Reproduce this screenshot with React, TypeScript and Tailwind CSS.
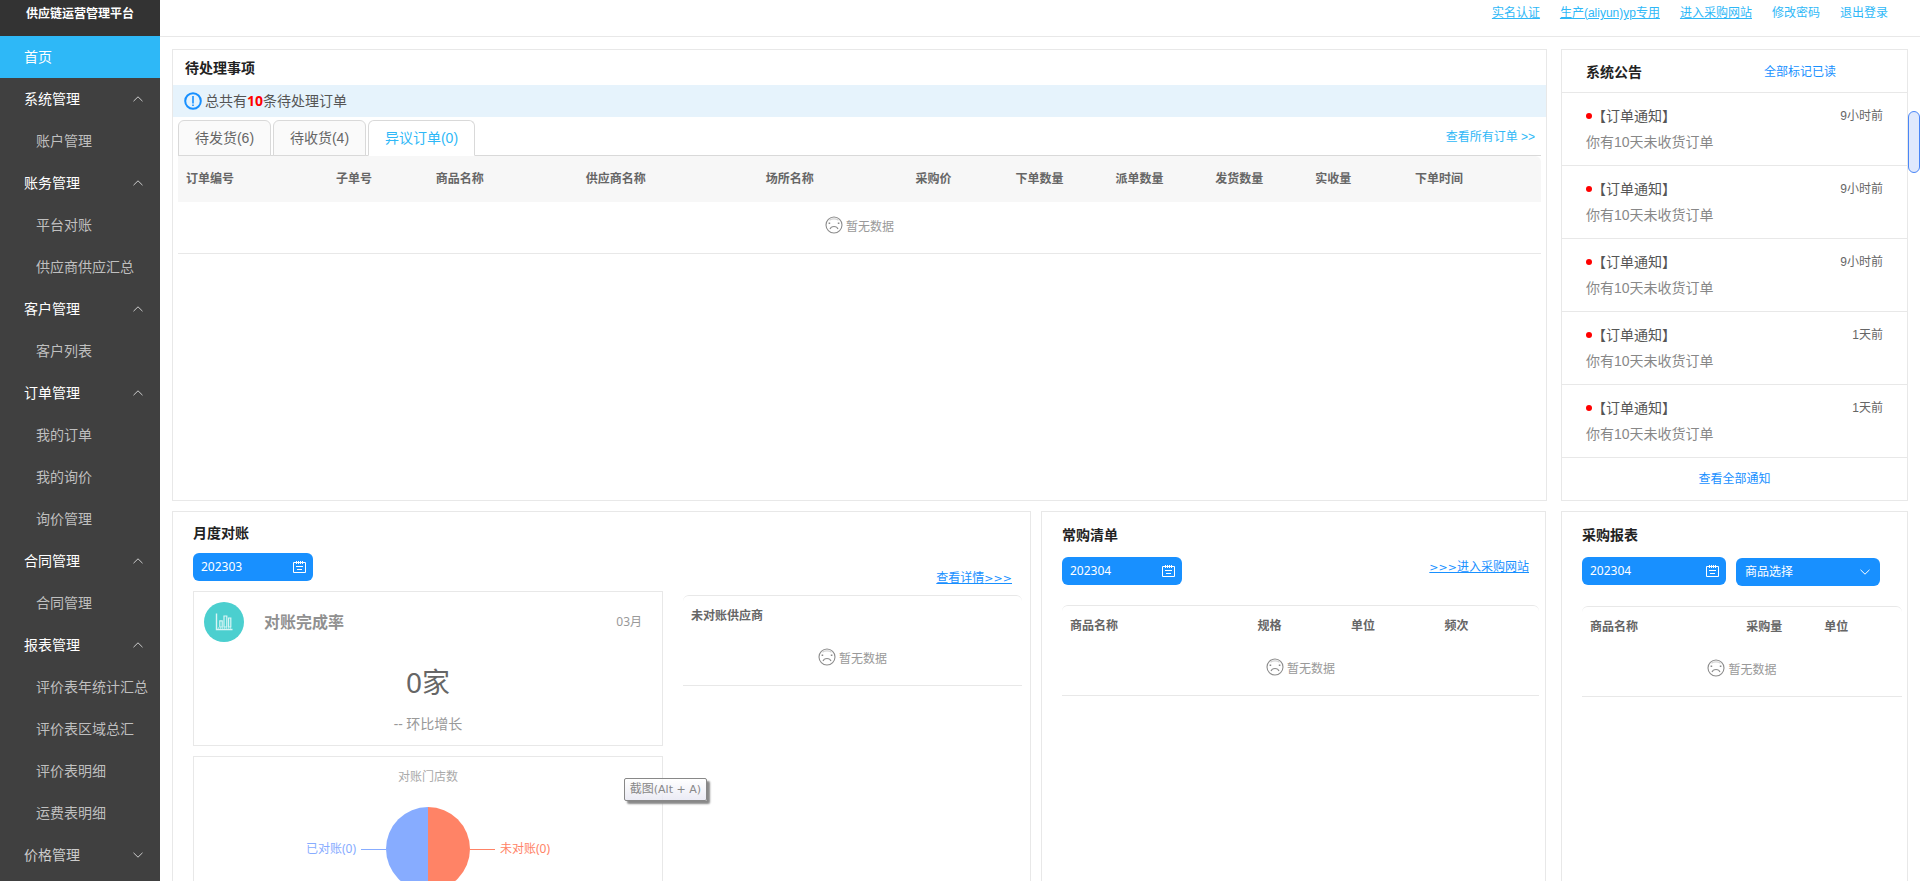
import React from "react";

type MenuItem = { label: string; kind: "home" | "group" | "item"; open?: boolean };

const menu: MenuItem[] = [
  { label: "首页", kind: "home" },
  { label: "系统管理", kind: "group", open: true },
  { label: "账户管理", kind: "item" },
  { label: "账务管理", kind: "group", open: true },
  { label: "平台对账", kind: "item" },
  { label: "供应商供应汇总", kind: "item" },
  { label: "客户管理", kind: "group", open: true },
  { label: "客户列表", kind: "item" },
  { label: "订单管理", kind: "group", open: true },
  { label: "我的订单", kind: "item" },
  { label: "我的询价", kind: "item" },
  { label: "询价管理", kind: "item" },
  { label: "合同管理", kind: "group", open: true },
  { label: "合同管理", kind: "item" },
  { label: "报表管理", kind: "group", open: true },
  { label: "评价表年统计汇总", kind: "item" },
  { label: "评价表区域总汇", kind: "item" },
  { label: "评价表明细", kind: "item" },
  { label: "运费表明细", kind: "item" },
  { label: "价格管理", kind: "group", open: false },
];

const notices = ["9小时前", "9小时前", "9小时前", "1天前", "1天前"];

type Column = { title: string; width: string };

const orderColumns: Column[] = [
  { title: "订单编号", width: "w-[11%]" },
  { title: "子单号", width: "w-[7.33%]" },
  { title: "商品名称", width: "w-[11%]" },
  { title: "供应商名称", width: "w-[13.2%]" },
  { title: "场所名称", width: "w-[11%]" },
  { title: "采购价", width: "w-[7.33%]" },
  { title: "下单数量", width: "w-[7.33%]" },
  { title: "派单数量", width: "w-[7.33%]" },
  { title: "发货数量", width: "w-[7.33%]" },
  { title: "实收量", width: "w-[7.33%]" },
  { title: "下单时间", width: "" },
];

const frequentColumns: Column[] = [
  { title: "商品名称", width: "w-[39.3%]" },
  { title: "规格", width: "w-[19.6%]" },
  { title: "单位", width: "w-[19.6%]" },
  { title: "频次", width: "" },
];

const reportColumns: Column[] = [
  { title: "商品名称", width: "w-[48.8%]" },
  { title: "采购量", width: "w-[24.4%]" },
  { title: "单位", width: "" },
];

function Chevron({ up }: { up?: boolean }) {
  return (
    <svg width="10" height="6" viewBox="0 0 10 6" fill="none" stroke="currentColor" strokeWidth="1" aria-hidden="true">
      <path d={up ? "M0.5 5.2 5 0.8 9.5 5.2" : "M0.5 0.8 5 5.2 9.5 0.8"} />
    </svg>
  );
}

function CalendarIcon() {
  return (
    <svg width="14" height="14" viewBox="0 0 14 14" fill="none" stroke="currentColor" strokeWidth="1" aria-hidden="true">
      <path d="M3 2.5H0.5V12.5H12.5V2.5H10M3 2.5H10" />
      <path d="M3.5 1V4M5.5 1V4M7.5 1V4M9.5 1V4" />
      <path d="M3 6.5H10M4 9.5H9" />
    </svg>
  );
}

function FrownIcon() {
  return (
    <svg width="18" height="18" viewBox="0 0 18 18" fill="none" stroke="#8c8c8c" strokeWidth="1.1" aria-hidden="true">
      <circle cx="9" cy="9" r="8" />
      <path d="M4.5 4.2C7 2.4 11 2.4 13.5 4.2" stroke="#d4d4d4" />
      <path d="M5 13C6.2 9.6 11.8 9.6 13 13" />
      <path d="M3.6 7.3H5.2M12.8 7.3H14.4" strokeWidth="1.6" />
    </svg>
  );
}

function ChartIcon() {
  return (
    <svg width="18" height="18" viewBox="0 0 18 18" fill="none" stroke="#d9f5f5" strokeWidth="1.2" aria-hidden="true">
      <path d="M1.5 0.5V16.5H17.5" strokeWidth="1.4" />
      <path d="M4.8 14V7.8H7.2V14ZM9 14V3H11.8V14ZM13.6 14V5H15.8V14Z" />
      <path d="M3 15H17" strokeDasharray="1 1" />
    </svg>
  );
}

function Empty() {
  return (
    <div className="flex items-start justify-center gap-[3px] text-xs text-[#999]">
      <FrownIcon />
      <span className="pt-[3px] leading-4">暂无数据</span>
    </div>
  );
}

function DataTable({ columns, shaded }: { columns: Column[]; shaded?: boolean }) {
  return (
    <table className="w-full table-fixed border-separate border-spacing-0 text-xs">
      <thead>
        <tr>
          {columns.map((c, i) => (
            <th
              key={c.title}
              className={`px-2 text-left font-bold text-[#666] ${c.width} ${shaded ? "h-[46px] bg-[#f7f7f7]" : "h-[41px] border-t border-[#e8e8e8]"} ${
                i === 0 && !shaded ? "rounded-tl-md" : ""
              } ${i === columns.length - 1 ? "rounded-tr-md" : ""}`}
            >
              {c.title}
            </th>
          ))}
        </tr>
      </thead>
      <tbody>
        <tr>
          <td colSpan={columns.length} className={`border-b border-[#e8e8e8] align-top ${shaded ? "h-[52px] pt-3.5" : "h-[50px] pt-3"}`}>
            <Empty />
          </td>
        </tr>
      </tbody>
    </table>
  );
}

function Arrows() {
  return <span className="font-['DejaVu_Sans',sans-serif] text-[11px]">&gt;&gt;&gt;</span>;
}

function MonthPicker({ value, label, width }: { value: string; label: string; width: string }) {
  return (
    <label className={`flex h-7 items-center rounded-md bg-[#1890ff] pr-1.5 pl-2 text-white ${width}`}>
      <input aria-label={label} defaultValue={value} className="w-0 min-w-0 flex-1 bg-transparent text-xs outline-none" />
      <CalendarIcon />
    </label>
  );
}

function Tab({ children, active, width }: { children: React.ReactNode; active?: boolean; width: string }) {
  return (
    <button
      role="tab"
      aria-selected={!!active}
      className={`h-9 shrink-0 rounded-t-md border font-['Liberation_Sans','Noto_Sans_CJK_SC',sans-serif] text-sm ${width} ${
        active ? "border-[#d9d9d9] border-b-white bg-white text-[#2eb8f7]" : "border-[#d9d9d9] bg-[#fafafa] text-[#666]"
      }`}
    >
      {children}
    </button>
  );
}

function Sidebar() {
  return (
    <aside className="flex w-40 shrink-0 flex-col bg-[#404040]">
      <h1 className="flex h-9 shrink-0 items-start justify-center bg-[#333] pt-[5px] text-xs leading-[18px] font-bold text-white">供应链运营管理平台</h1>
      <nav className="flex-1 overflow-y-auto text-sm [scrollbar-width:none]">
        {menu.map((m, i) => {
          if (m.kind === "home")
            return (
              <a key={i} href="#" className="flex h-[42px] items-center bg-[#2eb8f7] px-6 text-white">
                {m.label}
              </a>
            );
          if (m.kind === "group")
            return (
              <button key={i} aria-expanded={m.open} className={`flex h-[42px] w-full items-center justify-between pr-[17px] pl-6 ${m.open ? "text-white" : "text-[#ccc]"}`}>
                {m.label}
                <span className="text-[#ccc]">
                  <Chevron up={m.open} />
                </span>
              </button>
            );
          return (
            <a key={i} href="#" className="flex h-[42px] items-center pl-9 whitespace-nowrap text-[#bfbfbf]">
              {m.label}
            </a>
          );
        })}
      </nav>
    </aside>
  );
}

function PendingPanel() {
  return (
    <section className="border border-[#e8e8e8]">
      <h2 className="flex h-[35px] items-center px-3 text-sm font-bold text-[#222]">待处理事项</h2>
      <p className="flex h-8 items-center gap-[3px] bg-[#e6f3fc] px-[11px] text-sm text-[#555]">
        <svg width="18" height="18" viewBox="0 0 18 18" fill="none" stroke="#1890ff" aria-hidden="true">
          <circle cx="9" cy="9" r="7.8" strokeWidth="2" />
          <path d="M9 4V11.6M9 12.4V14" strokeWidth="1.6" />
        </svg>
        <span>
          总共有<b className="text-[#f00]">10</b>条待处理订单
        </span>
      </p>
      <div className="px-[5px] pt-[3px]">
        <div className="flex items-center justify-between border-b border-[#d9d9d9]">
          <div role="tablist" className="-mb-px flex gap-0.5">
            <Tab width="w-[93px]">待发货(6)</Tab>
            <Tab width="w-[93px]">待收货(4)</Tab>
            <Tab width="w-[107px]" active>
              异议订单(0)
            </Tab>
          </div>
          <a href="#" className="mr-1.5 pb-0.5 font-['Liberation_Sans','Noto_Sans_CJK_SC',sans-serif] text-xs text-[#2eb8f7]">
            查看所有订单 &gt;&gt;
          </a>
        </div>
        <DataTable columns={orderColumns} shaded />
      </div>
    </section>
  );
}

function NoticePanel() {
  return (
    <section className="border border-[#e8e8e8] font-['Liberation_Sans','Noto_Sans_CJK_SC',sans-serif]">
      <div className="flex h-[43px] items-center border-b border-[#e8e8e8] pl-6">
        <h2 className="w-[178px] pt-0.5 text-sm font-bold text-[#222]">系统公告</h2>
        <a href="#" className="pt-0.5 text-xs text-[#1890ff]">
          全部标记已读
        </a>
      </div>
      <ul>
        {notices.map((time, i) => (
          <li key={i} className="flex h-[73px] flex-col border-b border-[#e8e8e8] px-6 pt-2.5">
            <div className="flex items-center">
              <span className="size-1.5 rounded-full bg-[#f00]" />
              <span className="flex-1 text-sm leading-[26px] text-[#555]">【订单通知】</span>
              <time className="text-xs leading-[26px] text-[#666]">{time}</time>
            </div>
            <p className="text-sm leading-[26px] text-[#888]">你有10天未收货订单</p>
          </li>
        ))}
      </ul>
      <a href="#" className="flex h-[42px] items-center justify-center text-xs text-[#1890ff]">
        查看全部通知
      </a>
    </section>
  );
}

function PieChart() {
  return (
    <svg viewBox="0 0 260 110" className="mx-auto mt-5 h-[110px] w-[260px] overflow-visible text-xs" role="img" aria-label="对账门店数">
      <path d="M130 0A42 42 0 0 0 130 84Z" fill="#87acff" />
      <path d="M130 0A42 42 0 0 1 130 84Z" fill="#ff8366" />
      <path d="M63 42.5H88" stroke="#87acff" />
      <path d="M172 42.5H197" stroke="#ff8366" />
      <text x="58" y="46" textAnchor="end" fill="#87acff">
        已对账(0)
      </text>
      <text x="202" y="46" fill="#ff8366">
        未对账(0)
      </text>
    </svg>
  );
}

function MonthlyPanel() {
  return (
    <section className="grid min-h-[420px] grid-cols-[470fr_339fr] gap-x-5 border border-[#e8e8e8] pr-2 pl-5">
      <div>
        <h2 className="pt-[11px] text-sm leading-5 font-bold text-[#222]">月度对账</h2>
        <div className="pt-2.5 pb-2.5">
          <MonthPicker value="202303" label="对账月份" width="w-[120px]" />
        </div>
        <div className="flex h-[155px] flex-col border border-[#e8e8e8] pt-2.5">
          <div className="flex items-center pr-5 pl-2.5">
            <span className="grid size-10 place-items-center rounded-full bg-[#4bcfcf]">
              <ChartIcon />
            </span>
            <h3 className="ml-5 flex-1 text-base font-bold text-[#909090]">对账完成率</h3>
            <span className="text-xs text-[#999]">03月</span>
          </div>
          <p className="pt-5 text-center text-[28px] leading-10 text-[#666]">0家</p>
          <p className="pt-3 text-center text-sm leading-5 text-[#999]">-- 环比增长</p>
        </div>
        <div className="relative mt-2.5 border border-b-0 border-[#e8e8e8] pt-2.5">
          <h3 className="text-center text-xs leading-5 text-[#aaa]">对账门店数</h3>
          <PieChart />
          <div
            role="tooltip"
            className="absolute top-[21px] -right-[45px] rounded-xs border border-[#888] bg-linear-to-b from-white/80 to-[#e6e6f2]/80 px-[5px] text-xs leading-5 whitespace-nowrap text-[#888] shadow-[3px_3px_2px_#888]"
          >
            截图<span className="font-['DejaVu_Sans',sans-serif] text-[11px]">(Alt + A)</span>
          </div>
        </div>
      </div>
      <div className="pt-14">
        <div className="h-[27px] pr-2.5 text-right text-xs leading-5">
          <a href="#" className="text-[#1890ff] underline">
            查看详情
            <Arrows />
          </a>
        </div>
        <DataTable columns={[{ title: "未对账供应商", width: "" }]} />
      </div>
    </section>
  );
}

function FrequentPanel() {
  return (
    <section className="border border-[#e8e8e8] pr-1.5 pl-5">
      <h2 className="pt-[13px] text-sm leading-5 font-bold text-[#222]">常购清单</h2>
      <div className="flex items-start justify-between pt-3 pr-2.5 pb-5">
        <MonthPicker value="202304" label="清单月份" width="w-[120px]" />
        <a href="#" className="text-xs leading-5 text-[#1890ff] underline">
          <Arrows />
          进入采购网站
        </a>
      </div>
      <DataTable columns={frequentColumns} />
    </section>
  );
}

function ReportPanel() {
  return (
    <section className="border border-[#e8e8e8] pr-[5px] pl-5">
      <h2 className="pt-[13px] text-sm leading-5 font-bold text-[#222]">采购报表</h2>
      <div className="flex gap-2.5 pt-3 pb-5">
        <MonthPicker value="202304" label="报表月份" width="w-36" />
        <div className="relative w-36 pt-px">
          <select aria-label="商品选择" className="block h-7 w-full appearance-none rounded-md bg-[#1890ff] px-[9px] text-xs text-white">
            <option>商品选择</option>
          </select>
          <span className="pointer-events-none absolute inset-y-0 right-2.5 flex items-center text-white">
            <Chevron />
          </span>
        </div>
      </div>
      <DataTable columns={reportColumns} />
    </section>
  );
}

export default function App() {
  return (
    <div className="flex h-screen overflow-hidden bg-white font-['Noto_Sans','Noto_Sans_CJK_SC',sans-serif]">
      <Sidebar />
      <div className="relative flex min-w-0 flex-1 flex-col">
        <header className="flex h-[37px] shrink-0 items-start justify-end gap-5 border-b border-[#e8e8e8] pt-[3px] pr-8 font-['Liberation_Sans','Noto_Sans_CJK_SC',sans-serif] text-xs leading-5 text-[#2eb8f7]">
          <a href="#" className="underline">实名认证</a>
          <a href="#" className="underline">生产(aliyun)yp专用</a>
          <a href="#" className="underline">进入采购网站</a>
          <a href="#">修改密码</a>
          <a href="#">退出登录</a>
        </header>
        <main className="flex-1 overflow-y-auto p-3 [scrollbar-width:none]">
          <div className="grid grid-cols-[1375fr_347fr] gap-x-3.5">
            <PendingPanel />
            <NoticePanel />
          </div>
          <div className="grid grid-cols-[1375fr_347fr] gap-x-3.5 pt-2.5">
            <div className="grid grid-cols-[859fr_505fr] gap-x-2.5 pr-px">
              <MonthlyPanel />
              <FrequentPanel />
            </div>
            <ReportPanel />
          </div>
        </main>
        <div className="absolute top-[111px] right-0 h-[62px] w-3 rounded-full border border-[#4a86f7] bg-[#e0e9fd]" />
      </div>
    </div>
  );
}
